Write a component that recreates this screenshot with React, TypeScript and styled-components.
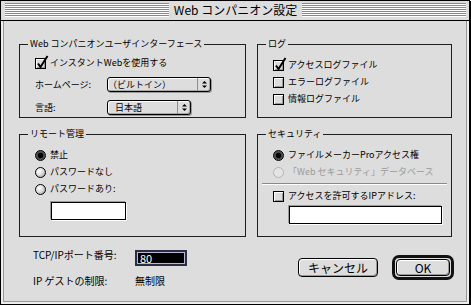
import React from 'react'
import styled, { createGlobalStyle } from 'styled-components'

const GlobalStyle = createGlobalStyle`
  html, body {
    margin: 0;
    padding: 0;
    background: #fff;
  }
`

const Window = styled.div`
  width: 470px;
  height: 305px;
  box-sizing: border-box;
  border: 1px solid #000;
  box-shadow: 1px 1px 0 #000;
  background: #eeeeee;
  display: flex;
  flex-direction: column;
  font-family: 'Noto Sans CJK JP', 'Liberation Sans', sans-serif;
  font-size: 9px;
  line-height: 12px;
  color: #000;
`

const TitleBar = styled.div`
  height: 20px;
  box-sizing: border-box;
  border-bottom: 1px solid #000;
  padding: 2px 3px 3px 4px;
  background: #dddddd;
  display: flex;
`

const Stripes = styled.div`
  flex: 1;
  background: repeating-linear-gradient(
    to bottom,
    #8a8a8a 0 1px,
    #ffffff 1px 2px
  );
`

const Title = styled.div`
  padding: 0 5px;
  font-size: 12px;
  line-height: 14px;
`

const Body = styled.div`
  flex: 1;
  margin: 0 2px 2px;
  border: 1px solid #999;
  border-top: none;
  background: #dddddd;
  padding: 17px 14px 0 15px;
  display: flex;
  flex-direction: column;
`

const Groups = styled.div`
  display: grid;
  grid-template-columns: 227px 195px;
  grid-template-rows: 80px 109px;
  column-gap: 11px;
  row-gap: 10px;
`

const Group = styled.fieldset<{ $top: number }>`
  margin: 0;
  min-width: 0;
  box-sizing: border-box;
  border: 1px solid #1e1e1e;
  padding: ${p => p.$top}px 5px 0 15px;
  display: flex;
  flex-direction: column;
`

const Legend = styled.legend`
  margin-left: -7px;
  padding: 0 2px;
  line-height: 12px;
`

const Row = styled.div<{ $gap?: number }>`
  display: flex;
  align-items: center;
  gap: 4px;
  height: 14px;
  margin-bottom: ${p => p.$gap ?? 3}px;
`

const Label = styled.span<{ $disabled?: boolean; $size?: number }>`
  white-space: nowrap;
  font-size: ${p => p.$size ?? 9}px;
  color: ${p => (p.$disabled ? '#9a9a9a' : '#000')};
`

const Box = styled.span`
  position: relative;
  flex: none;
  width: 11px;
  height: 11px;
  box-sizing: border-box;
  border: 1px solid #000;
  background: #dcdcdc;
  box-shadow: inset 1px 1px 0 #fff, inset -1px -1px 0 #9a9a9a;
`

const Check = styled.svg`
  position: absolute;
  left: 0;
  top: -4px;
  overflow: visible;
`

const Radio = styled.span<{ $on?: boolean; $disabled?: boolean }>`
  flex: none;
  width: 11px;
  height: 11px;
  box-sizing: border-box;
  border-radius: 50%;
  border: 1px solid ${p => (p.$disabled ? '#b4b4b4' : '#000')};
  background: ${p =>
    p.$on
      ? 'radial-gradient(circle at 50% 50%, #000 0 2.4px, #444 3px, #7a7a7a 100%)'
      : p.$disabled
      ? '#e4e4e4'
      : 'radial-gradient(circle at 35% 35%, #fff 0, #dedede 45%, #8f8f8f 100%)'};
`

const FieldGrid = styled.div`
  display: grid;
  grid-template-columns: 72px auto;
  row-gap: 8px;
  align-items: center;
`

const Popup = styled.div<{ $w: number }>`
  width: ${p => p.$w}px;
  height: 15px;
  box-sizing: border-box;
  border: 1px solid #000;
  border-radius: 3px;
  background: #dddddd;
  box-shadow: inset 1px 1px 0 #fff, inset -1px -1px 0 #a8a8a8, 1px 1px 0 #9a9a9a;
  display: flex;
  align-items: center;
`

const PopupText = styled.span<{ $pad: number }>`
  flex: 1;
  padding-left: ${p => p.$pad}px;
  white-space: nowrap;
`

const PopupArrows = styled.span`
  width: 12px;
  align-self: stretch;
  border-left: 1px solid #8f8f8f;
  display: flex;
  align-items: center;
  justify-content: center;
`

const TextField = styled.div<{ $w: number; $indent: number }>`
  width: ${p => p.$w}px;
  height: 18px;
  box-sizing: border-box;
  margin-left: ${p => p.$indent}px;
  border: 1px solid #000;
  background: #fff;
  box-shadow: -1px -1px 0 #9a9a9a, 1px 1px 0 #fff;
`

const Separator = styled.div`
  height: 1px;
  margin: 4px 0 5px -11px;
  width: 185px;
  background: #8a8a8a;
  box-shadow: 0 1px 0 #fff;
`

const Footer = styled.div`
  display: flex;
  justify-content: space-between;
  align-items: flex-start;
  margin-top: 13px;
`

const PortGrid = styled.div`
  display: grid;
  grid-template-columns: 102px auto;
  grid-template-rows: 16px 12px;
  row-gap: 9px;
  align-items: center;
  padding-left: 14px;
`

const PortLabel = styled(Label)`
  align-self: start;
  margin-top: -1px;
`

const PortField = styled.div`
  width: 52px;
  height: 16px;
  box-sizing: border-box;
  border: 2px solid #2c2c44;
  padding: 1px;
  background: #b9b9d6;
`

const PortValue = styled.div`
  height: 100%;
  background: #000;
  color: #fff;
  font-size: 11px;
  line-height: 10px;
  padding-left: 2px;
`

const Buttons = styled.div`
  display: flex;
  align-items: center;
  gap: 14px;
  margin-top: 5px;
  margin-right: -2px;
`

const Button = styled.div<{ $w: number; $h: number }>`
  width: ${p => p.$w}px;
  height: ${p => p.$h}px;
  box-sizing: border-box;
  border: 1px solid #000;
  border-radius: 4px;
  background: #dddddd;
  box-shadow: inset 1px 1px 0 #fff, inset -1px -1px 0 #9a9a9a;
  display: flex;
  align-items: center;
  justify-content: center;
  font-size: 12px;
`

const DefaultRing = styled.div`
  border: 3px solid #111;
  border-radius: 7px;
  padding: 1px;
  background: #dddddd;
`

const CheckBox = ({ checked }: { checked?: boolean }) => (
  <Box>
    {checked && (
      <Check width="13" height="14" viewBox="0 0 13 14">
        <path d="M2 8.5 L4.5 12 L11.5 1" fill="none" stroke="#000" strokeWidth="2" />
      </Check>
    )}
  </Box>
)

const Arrows = () => (
  <svg width="5" height="9" viewBox="0 0 5 9">
    <polygon points="0,3.5 2.5,1 5,3.5" fill="#000" />
    <polygon points="0,5.5 2.5,8 5,5.5" fill="#000" />
  </svg>
)

export default function App() {
  return (
    <>
      <GlobalStyle />
      <Window>
        <TitleBar>
          <Stripes />
          <Title>Web コンパニオン設定</Title>
          <Stripes />
        </TitleBar>
        <Body>
          <Groups>
            <Group $top={6}>
              <Legend>Web コンパニオンユーザインターフェース</Legend>
              <Row $gap={7}>
                <CheckBox checked />
                <Label>インスタントWebを使用する</Label>
              </Row>
              <FieldGrid>
                <Label>ホームページ:</Label>
                <Popup $w={104}>
                  <PopupText $pad={0}>（ビルトイン）</PopupText>
                  <PopupArrows>
                    <Arrows />
                  </PopupArrows>
                </Popup>
                <Label>言語:</Label>
                <Popup $w={84}>
                  <PopupText $pad={7}>日本語</PopupText>
                  <PopupArrows>
                    <Arrows />
                  </PopupArrows>
                </Popup>
              </FieldGrid>
            </Group>

            <Group $top={8}>
              <Legend>ログ</Legend>
              <Row>
                <CheckBox checked />
                <Label>アクセスログファイル</Label>
              </Row>
              <Row>
                <CheckBox />
                <Label>エラーログファイル</Label>
              </Row>
              <Row>
                <CheckBox />
                <Label>情報ログファイル</Label>
              </Row>
            </Group>

            <Group $top={8}>
              <Legend>リモート管理</Legend>
              <Row>
                <Radio $on />
                <Label>禁止</Label>
              </Row>
              <Row>
                <Radio />
                <Label>パスワードなし</Label>
              </Row>
              <Row $gap={6}>
                <Radio />
                <Label>パスワードあり:</Label>
              </Row>
              <TextField $w={75} $indent={16} />
            </Group>

            <Group $top={8}>
              <Legend>セキュリティ</Legend>
              <Row>
                <Radio $on />
                <Label>ファイルメーカーProアクセス権</Label>
              </Row>
              <Row $gap={0}>
                <Radio $disabled />
                <Label $disabled>「Web セキュリティ」データベース</Label>
              </Row>
              <Separator />
              <Row>
                <CheckBox />
                <Label>アクセスを許可するIPアドレス:</Label>
              </Row>
              <TextField $w={153} $indent={16} />
            </Group>
          </Groups>

          <Footer>
            <PortGrid>
              <PortLabel $size={10}>TCP/IPポート番号:</PortLabel>
              <PortField>
                <PortValue>80</PortValue>
              </PortField>
              <Label $size={10}>IP ゲストの制限:</Label>
              <Label $size={10}>無制限</Label>
            </PortGrid>
            <Buttons>
              <Button $w={80} $h={19}>キャンセル</Button>
              <DefaultRing>
                <Button $w={54} $h={17}>OK</Button>
              </DefaultRing>
            </Buttons>
          </Footer>
        </Body>
      </Window>
    </>
  )
}
